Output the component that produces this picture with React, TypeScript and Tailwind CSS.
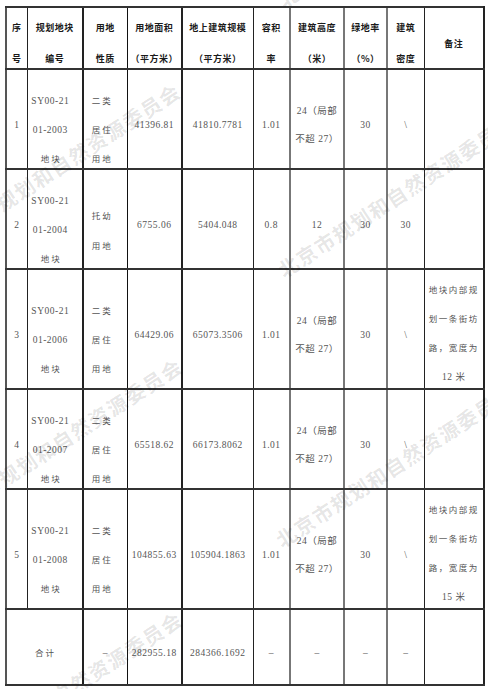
import React from "react";

type Cell = { lines: string[]; pad?: string; span?: number };

const HEAD: string[][] = [
  ["序", "号"],
  ["规划地块", "编号"],
  ["用地", "性质"],
  ["用地面积", "（平方米）"],
  ["地上建筑规模", "（平方米）"],
  ["容积", "率"],
  ["建筑高度", "（米）"],
  ["绿地率", "（%）"],
  ["建筑", "密度"],
  ["备注"],
];

// left edge of every column, copied off the scan (some lines print heavier)
const EDGE = [
  "border-l-2 border-l-[#555]",
  "border-l border-l-[#222]",
  "border-l-2 border-l-[#222]",
  "border-l border-l-[#111]",
  "border-l-2 border-l-[#222]",
  "border-l border-l-[#222]",
  "border-l-2 border-l-[#777]",
  "border-l-2 border-l-[#777]",
  "border-l-2 border-l-[#777]",
  "border-l border-l-[#222]",
];

const ONE = "pt-[12px] leading-[29px]";
const THREE = "pt-[22px] leading-[29px]";
const TWO = "pt-[12px] leading-[28px]";
const NOTE = "pt-[10px] leading-[29px]";

const parcel = (no: string, code: string, use: string[], area: string, gfa: string, far: string, height: string[], green: string, density: string, note: string[]): Cell[] => [
  { lines: [no], pad: ONE },
  { lines: ["SY00-21", code, "地块"], pad: THREE + " pr-[9px]" },
  { lines: use, pad: (use.length === 3 ? THREE : "pt-[24px] leading-[30px]") + " pr-[8px]" },
  { lines: [area], pad: ONE },
  { lines: [gfa], pad: ONE },
  { lines: [far], pad: ONE },
  { lines: height, pad: height.length === 2 ? TWO : ONE },
  { lines: [green], pad: ONE },
  { lines: [density], pad: ONE },
  { lines: note, pad: NOTE },
];

const HIGH = ["24（局部", "不超 27）"];
const HOUSING = ["二类", "居住", "用地"];

// h = inner box height (row height less the shared 2px rules)
const ROWS: { h: string; cells: Cell[] }[] = [
  { h: "h-[98px]", cells: parcel("1", "01-2003", HOUSING, "41396.81", "41810.7781", "1.01", HIGH, "30", "\\", []) },
  { h: "h-[98px]", cells: parcel("2", "01-2004", ["托幼", "用地"], "6755.06", "5404.048", "0.8", ["12"], "30", "30", []) },
  { h: "h-[118px]", cells: parcel("3", "01-2006", HOUSING, "64429.06", "65073.3506", "1.01", HIGH, "30", "\\", ["地块内部规", "划一条街坊", "路，宽度为", "12 米"]) },
  { h: "h-[98px]", cells: parcel("4", "01-2007", HOUSING, "65518.62", "66173.8062", "1.01", HIGH, "30", "\\", []) },
  { h: "h-[118px]", cells: parcel("5", "01-2008", HOUSING, "104855.63", "105904.1863", "1.01", HIGH, "30", "\\", ["地块内部规", "划一条街坊", "路，宽度为", "15 米"]) },
  {
    h: "h-[74px]",
    cells: [
      { lines: ["合计"], pad: ONE, span: 2 },
      { lines: ["–"], pad: ONE },
      { lines: ["282955.18"], pad: ONE },
      { lines: ["284366.1692"], pad: ONE },
      { lines: ["–"], pad: ONE },
      { lines: ["–"], pad: ONE },
      { lines: ["–"], pad: ONE },
      { lines: ["–"], pad: ONE },
      { lines: [], pad: ONE },
    ],
  },
];

// the scan's Song face draws hanzi small inside the em box, so pure-hanzi lines
// get a smaller size and open spacing to read the same
const isHan = (s: string) => /^[\u4e00-\u9fff，]+$/.test(s);

const MARK = "北京市规划和自然资源委员会";

function Watermark({ at }: { at: string }) {
  return (
    <div
      className={`pointer-events-none absolute origin-left rotate-[-33deg] whitespace-nowrap font-['Noto_Sans_CJK_SC',sans-serif] text-[20px] leading-[20px] font-bold tracking-[1.5px] text-black/[0.11] ${at}`}
    >
      {MARK}
    </div>
  );
}

export default function App() {
  return (
    <div className="relative h-[689px] w-[488px] overflow-hidden bg-white pl-[5px] pt-[6px]">
      <table className="w-[478px] table-fixed border-collapse">
        <colgroup>
          <col className="w-[21px]" />
          <col className="w-[56px]" />
          <col className="w-[44px]" />
          <col className="w-[55px]" />
          <col className="w-[71px]" />
          <col className="w-[37px]" />
          <col className="w-[54px]" />
          <col className="w-[43px]" />
          <col className="w-[37px]" />
          <col className="w-[60px]" />
        </colgroup>
        <thead>
          <tr>
            {HEAD.map((lines, i) => (
              <th
                key={i}
                className={`border-y-2 border-y-[#333] ${EDGE[i]} ${i === 9 ? "border-r-2 border-r-[#222]" : ""} p-0 align-top font-['Noto_Sans_CJK_SC',sans-serif] text-[9px] font-bold tracking-[0.5px] text-[#1a1a1a]`}
              >
                <div className="flex h-[60px] flex-col items-center justify-center gap-[17px] pt-[11px] leading-[14px]">
                  {lines.map((l) => (
                    <span key={l}>{l}</span>
                  ))}
                </div>
              </th>
            ))}
          </tr>
        </thead>
        <tbody>
          {ROWS.map((row, r) => {
            let col = 0;
            return (
              <tr key={r}>
                {row.cells.map((c, i) => {
                  const edge = EDGE[col];
                  col += c.span ?? 1;
                  return (
                    <td
                      key={i}
                      colSpan={c.span}
                      className={`border-y-2 border-y-[#333] ${edge} ${col === 10 ? "border-r-2 border-r-[#222]" : ""} p-0 align-top font-['Liberation_Serif','Noto_Sans_CJK_SC',serif] text-[9.5px] tracking-[0.5px] text-[#555]`}
                    >
                      <div className={`flex ${row.h} flex-col items-center justify-center ${c.pad}`}>
                        {c.lines.map((l, k) => (
                          <div
                            key={k}
                            className={`whitespace-nowrap ${isHan(l) ? (l.length > 3 ? "text-[8.5px] tracking-[1.5px]" : "pl-[2px] text-[8.5px] tracking-[2px]") : ""}`}
                          >
                            {l}
                          </div>
                        ))}
                      </div>
                    </td>
                  );
                })}
              </tr>
            );
          })}
        </tbody>
      </table>

      <Watermark at="left-[280px] top-[-8px]" />
      <Watermark at="left-[280px] top-[262px]" />
      <Watermark at="left-[278px] top-[532px]" />
      <Watermark at="left-[-56px] top-[231px]" />
      <Watermark at="left-[-54px] top-[506px]" />
      <Watermark at="left-[-54px] top-[759px]" />
    </div>
  );
}
